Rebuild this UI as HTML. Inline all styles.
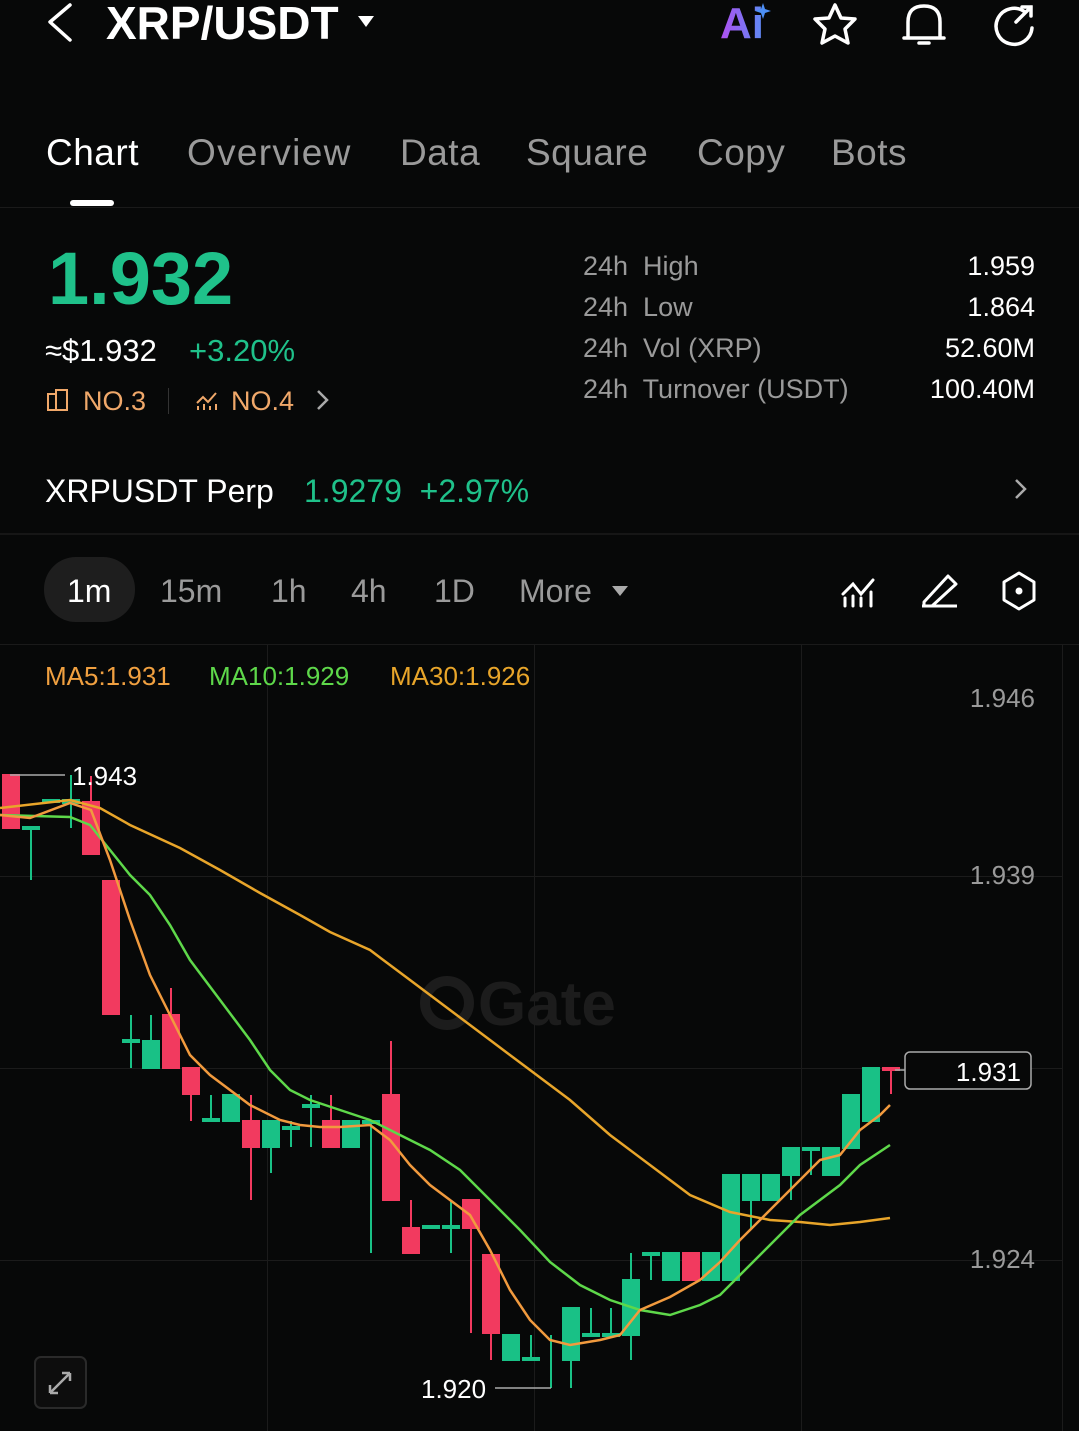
<!DOCTYPE html>
<html><head><meta charset="utf-8"><style>
*{margin:0;padding:0;box-sizing:border-box}
body{width:1079px;height:1431px;background:#070808;color:#fff;font-family:"Liberation Sans",sans-serif;position:relative;overflow:hidden}
.a{position:absolute;white-space:nowrap}
.g{color:#9a9a9a}
.gr{color:#1fc18a}
.or{color:#f0a86a}
.t{letter-spacing:0.5px}
</style></head><body>
<svg class="a" style="left:0;top:0" width="1079" height="1431" viewBox="0 0 1079 1431">
<path d="M70 5 L50 22 L70 40" fill="none" stroke="#fff" stroke-width="3.5" stroke-linecap="round" stroke-linejoin="round"/>
<path d="M358 16 L374 16 L366 27Z" fill="#fff"/>
<defs><linearGradient id="ai" x1="0" x2="1"><stop offset="0" stop-color="#b04ff0"/><stop offset="1" stop-color="#5b8cf5"/></linearGradient></defs>
<text x="720" y="38" font-family="Liberation Sans" font-weight="bold" font-size="44" fill="url(#ai)">Ai</text>
<path d="M763 3 l2 6 6 2 -6 2 -2 6 -2 -6 -6 -2 6 -2z" fill="#4d8ff5"/>
<path d="M835 5 L841 18 L855 19 L845 29 L848 43 L835 36 L822 43 L825 29 L815 19 L829 18Z" fill="none" stroke="#fff" stroke-width="3.5" stroke-linejoin="round"/>
<path d="M908 38 L908 22 Q908 6 924 6 Q940 6 940 22 L940 38 Z M904 38 L944 38 M919 43 L929 43" fill="none" stroke="#fff" stroke-width="3.5" stroke-linejoin="round" stroke-linecap="round"/>
<path d="M1025 12 A18 18 0 1 0 1032 28" fill="none" stroke="#fff" stroke-width="3.5" stroke-linecap="round"/>
<path d="M1016 22 L1031 7 M1022 7 L1031 7 L1031 16" fill="none" stroke="#fff" stroke-width="3.5" stroke-linecap="round"/>
<rect x="70" y="200" width="44" height="6" rx="3" fill="#fff"/>
<rect x="0" y="207" width="1079" height="1" fill="#1a1a1a"/>
<path d="M48 394 h8 v16 h-8z M56 390 h11 v20 h-11z" fill="none" stroke="#f0a86a" stroke-width="2"/>
<rect x="168" y="388" width="1" height="26" fill="#333"/>
<path d="M197 403 l6 -6 5 5 8 -9 M198 410 v-4 M204 410 v-6 M210 410 v-4 M216 410 v-6" fill="none" stroke="#f0a86a" stroke-width="2"/>
<path d="M318 391 l9 9 -9 9" fill="none" stroke="#aaa" stroke-width="2.5"/>
<path d="M1016 480 l9 9 -9 9" fill="none" stroke="#aaa" stroke-width="2.5"/>
<rect x="0" y="533" width="1079" height="2" fill="#161616"/>
<rect x="44" y="557" width="91" height="65" rx="32" fill="#1e1e1e"/>
<path d="M612 586 L628 586 L620 596Z" fill="#aaa"/>
<path d="M843 594 l10 -10 8 10 12 -14 M845 606 v-8 M853 606 v-10 M861 606 v-8 M871 606 v-14" fill="none" stroke="#fff" stroke-width="3" stroke-linecap="round"/>
<path d="M924 602 L948 576 L956 584 L932 606 H924Z M922 606 H957" fill="none" stroke="#fff" stroke-width="3" stroke-linejoin="round"/>
<path d="M1019 573 L1034 582 V600 L1019 609 L1004 600 V582Z" fill="none" stroke="#fff" stroke-width="3" stroke-linejoin="round"/>
<circle cx="1019" cy="591" r="3.5" fill="#fff"/>
<rect x="0" y="644" width="1079" height="1" fill="#1a1a1a"/>
<g fill="#1b1b1b">
<rect x="267" y="645" width="1" height="786"/><rect x="534" y="645" width="1" height="786"/><rect x="801" y="645" width="1" height="786"/><rect x="1062" y="645" width="1" height="786"/>
<rect x="0" y="876" width="1062" height="1"/><rect x="0" y="1068" width="1062" height="1"/><rect x="0" y="1260" width="1062" height="1"/>
</g>
<circle cx="447" cy="1003" r="22" fill="none" stroke="#1c1c1c" stroke-width="10"/>
<text x="478" y="1025" font-family="Liberation Sans" font-weight="bold" font-size="62" fill="#1c1c1c">Gate</text>
<g stroke-width="2">
<g stroke="#f23a5f" fill="#f23a5f">
<line x1="11" y1="775" x2="11" y2="828"/><rect x="3" y="775" width="16" height="53"/>
<line x1="91" y1="776" x2="91" y2="854"/><rect x="83" y="802" width="16" height="52"/>
<rect x="103" y="881" width="16" height="133"/>
<line x1="171" y1="988" x2="171" y2="1068"/><rect x="163" y="1015" width="16" height="53"/>
<line x1="191" y1="1068" x2="191" y2="1121"/><rect x="183" y="1068" width="16" height="26"/>
<line x1="251" y1="1095" x2="251" y2="1200"/><rect x="243" y="1121" width="16" height="26"/>
<line x1="331" y1="1095" x2="331" y2="1147"/><rect x="323" y="1121" width="16" height="26"/>
<line x1="391" y1="1041" x2="391" y2="1200"/><rect x="383" y="1095" width="16" height="105"/>
<line x1="411" y1="1200" x2="411" y2="1253"/><rect x="403" y="1228" width="16" height="25"/>
<line x1="471" y1="1200" x2="471" y2="1333"/><rect x="463" y="1200" width="16" height="28"/>
<line x1="491" y1="1255" x2="491" y2="1360"/><rect x="483" y="1255" width="16" height="78"/>
<rect x="683" y="1253" width="16" height="27"/>
<line x1="891" y1="1068" x2="891" y2="1094"/><rect x="883" y="1068" width="16" height="2"/>
</g>
<g stroke="#19c186" fill="#19c186">
<line x1="31" y1="828" x2="31" y2="880"/><rect x="23" y="827" width="16" height="2"/>
<rect x="43" y="800" width="16" height="2"/>
<line x1="71" y1="775" x2="71" y2="828"/><rect x="63" y="800" width="16" height="3"/>
<line x1="131" y1="1015" x2="131" y2="1068"/><rect x="123" y="1040" width="16" height="2"/>
<line x1="151" y1="1015" x2="151" y2="1068"/><rect x="143" y="1041" width="16" height="27"/>
<line x1="211" y1="1095" x2="211" y2="1121"/><rect x="203" y="1119" width="16" height="2"/>
<rect x="223" y="1095" width="16" height="26"/>
<line x1="271" y1="1121" x2="271" y2="1173"/><rect x="263" y="1121" width="16" height="26"/>
<line x1="291" y1="1121" x2="291" y2="1147"/><rect x="283" y="1127" width="16" height="2"/>
<line x1="311" y1="1095" x2="311" y2="1147"/><rect x="303" y="1105" width="16" height="2"/>
<rect x="343" y="1121" width="16" height="26"/>
<line x1="371" y1="1121" x2="371" y2="1253"/><rect x="363" y="1121" width="16" height="2"/>
<rect x="423" y="1226" width="16" height="2"/>
<line x1="451" y1="1200" x2="451" y2="1253"/><rect x="443" y="1226" width="16" height="2"/>
<rect x="503" y="1335" width="16" height="25"/>
<line x1="531" y1="1335" x2="531" y2="1360"/><rect x="523" y="1358" width="16" height="2"/>
<line x1="551" y1="1335" x2="551" y2="1388"/>
<line x1="571" y1="1308" x2="571" y2="1388"/><rect x="563" y="1308" width="16" height="52"/>
<line x1="591" y1="1308" x2="591" y2="1335"/><rect x="583" y="1334" width="16" height="2"/>
<line x1="611" y1="1308" x2="611" y2="1335"/><rect x="603" y="1334" width="16" height="2"/>
<line x1="631" y1="1253" x2="631" y2="1360"/><rect x="623" y="1280" width="16" height="55"/>
<line x1="651" y1="1253" x2="651" y2="1280"/><rect x="643" y="1253" width="16" height="2"/>
<rect x="663" y="1253" width="16" height="27"/>
<rect x="703" y="1253" width="16" height="27"/>
<rect x="723" y="1175" width="16" height="105"/>
<line x1="751" y1="1175" x2="751" y2="1228"/><rect x="743" y="1175" width="16" height="25"/>
<rect x="763" y="1175" width="16" height="25"/>
<line x1="791" y1="1148" x2="791" y2="1200"/><rect x="783" y="1148" width="16" height="27"/>
<line x1="811" y1="1148" x2="811" y2="1175"/><rect x="803" y="1148" width="16" height="2"/>
<rect x="823" y="1148" width="16" height="27"/>
<rect x="843" y="1095" width="16" height="53"/>
<rect x="863" y="1068" width="16" height="53"/>
</g>
</g>
<polyline fill="none" stroke="#e8a52a" stroke-width="2.5" points="0,808 70,800 100,808 130,825 180,848 220,870 260,893 300,915 330,932 370,950 410,980 450,1010 490,1040 530,1070 570,1100 610,1135 650,1165 690,1195 730,1212 770,1220 800,1222 830,1225 860,1222 890,1218"/>
<polyline fill="none" stroke="#5ed84a" stroke-width="2.5" points="0,815 70,817 90,825 110,850 130,875 150,895 170,925 190,960 220,1000 250,1040 270,1070 290,1090 310,1100 340,1110 370,1120 400,1135 430,1150 460,1170 490,1200 520,1230 550,1262 580,1285 610,1300 640,1310 670,1315 700,1305 720,1295 750,1265 780,1235 800,1215 820,1200 840,1185 860,1165 890,1145"/>
<polyline fill="none" stroke="#f19a3e" stroke-width="2.5" points="0,815 30,818 70,803 91,810 110,860 130,920 150,975 170,1015 190,1055 210,1075 230,1090 250,1105 280,1120 300,1125 320,1127 340,1127 370,1125 390,1140 410,1165 430,1185 450,1200 470,1215 490,1250 510,1290 530,1320 550,1340 570,1345 600,1340 620,1335 640,1310 670,1297 700,1280 720,1262 740,1240 760,1220 780,1200 800,1180 820,1160 840,1155 860,1130 880,1115 890,1105"/>
<line x1="10" y1="775" x2="65" y2="775" stroke="#aaa" stroke-width="1.5"/>
<line x1="495" y1="1388" x2="551" y2="1388" stroke="#aaa" stroke-width="1.5"/>
<line x1="895" y1="1070" x2="905" y2="1070" stroke="#aaa" stroke-width="1.5"/>
<rect x="905" y="1052" width="126" height="37" rx="5" fill="#070808" stroke="#aaa" stroke-width="1.5"/>
<rect x="35" y="1357" width="51" height="51" rx="6" fill="#0d0d0d" stroke="#2a2a2a" stroke-width="2"/>
<path d="M50 1393 L70 1373 M50 1393 v-8 M50 1393 h8 M70 1373 h-8 M70 1373 v8" fill="none" stroke="#aaa" stroke-width="2.5"/>
</svg>

<div class="a" style="left:106px;top:-4px;font-size:46px;font-weight:bold;letter-spacing:0px">XRP/USDT</div>
<div class="a t" style="left:46px;top:132px;font-size:37px">Chart</div>
<div class="a g t" style="left:187px;top:132px;font-size:37px;letter-spacing:1.3px">Overview</div>
<div class="a g t" style="left:400px;top:132px;font-size:37px">Data</div>
<div class="a g t" style="left:526px;top:132px;font-size:37px">Square</div>
<div class="a g t" style="left:697px;top:132px;font-size:37px">Copy</div>
<div class="a g t" style="left:831px;top:132px;font-size:37px">Bots</div>

<div class="a gr" style="left:48px;top:236px;font-size:74px;font-weight:bold;letter-spacing:0px">1.932</div>
<div class="a" style="left:45px;top:333px;font-size:31px">≈$1.932</div>
<div class="a gr" style="left:189px;top:333px;font-size:31px">+3.20%</div>
<div class="a or" style="left:83px;top:386px;font-size:27px">NO.3</div>
<div class="a or" style="left:231px;top:386px;font-size:27px">NO.4</div>

<div class="a g" style="left:583px;top:246px;font-size:27px;line-height:41px">24h&nbsp; High<br>24h&nbsp; Low<br>24h&nbsp; Vol (XRP)<br>24h&nbsp; Turnover (USDT)</div>
<div class="a" style="right:44px;top:246px;font-size:27px;line-height:41px;text-align:right">1.959<br>1.864<br>52.60M<br>100.40M</div>

<div class="a" style="left:45px;top:473px;font-size:32px">XRPUSDT Perp</div>
<div class="a gr" style="left:304px;top:473px;font-size:32px">1.9279&nbsp; +2.97%</div>

<div class="a" style="left:67px;top:573px;font-size:32px">1m</div>
<div class="a g" style="left:160px;top:573px;font-size:32px">15m</div>
<div class="a g" style="left:271px;top:573px;font-size:32px">1h</div>
<div class="a g" style="left:351px;top:573px;font-size:32px">4h</div>
<div class="a g" style="left:434px;top:573px;font-size:32px">1D</div>
<div class="a g" style="left:519px;top:573px;font-size:32px">More</div>

<div class="a" style="left:45px;top:661px;font-size:26px;color:#f0a040">MA5:1.931</div>
<div class="a" style="left:209px;top:661px;font-size:26px;color:#5ed84a">MA10:1.929</div>
<div class="a" style="left:390px;top:661px;font-size:26px;color:#e8a52a">MA30:1.926</div>

<div class="a g" style="right:44px;top:683px;font-size:26px">1.946</div>
<div class="a g" style="right:44px;top:860px;font-size:26px">1.939</div>
<div class="a g" style="right:44px;top:1244px;font-size:26px">1.924</div>
<div class="a" style="right:58px;top:1057px;font-size:26px">1.931</div>
<div class="a" style="left:72px;top:761px;font-size:26px">1.943</div>
<div class="a" style="left:421px;top:1374px;font-size:26px">1.920</div>
</body></html>
